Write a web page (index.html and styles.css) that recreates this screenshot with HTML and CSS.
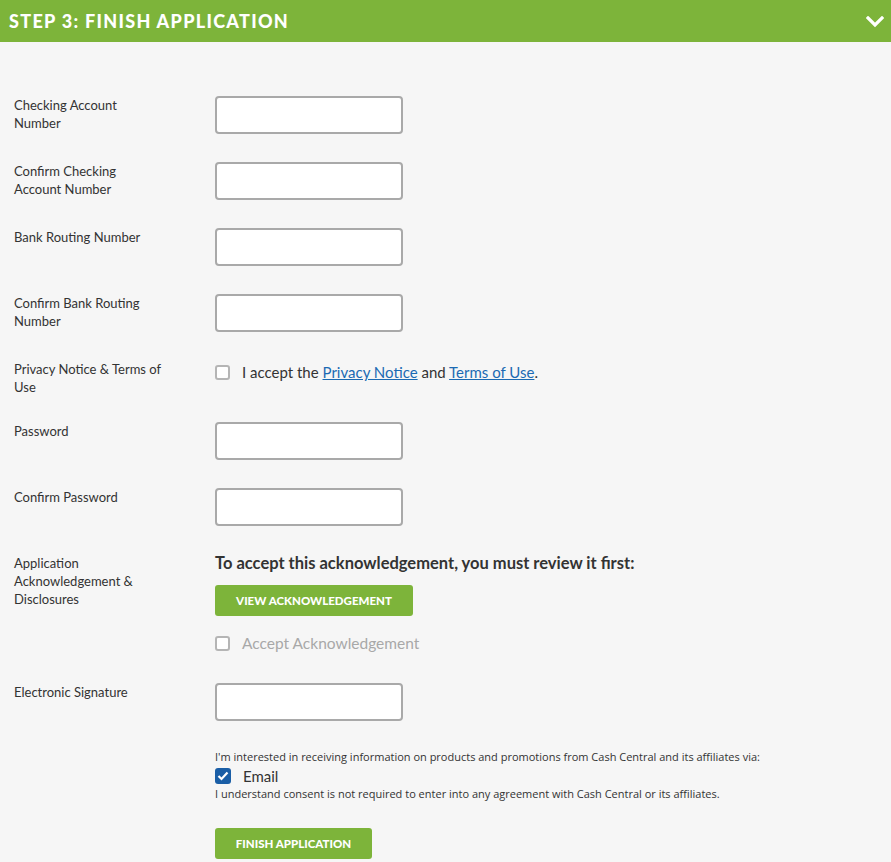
FILE: index.html
```html
<!DOCTYPE html>
<html>
<head>
    <meta charset="UTF-8">
    <meta name="viewport" content="width=device-width, initial-scale=1.0">
    <title>Finish Application</title>
    <link rel="stylesheet" href="styles.css">
</head>
<body>
    <div class="step-header">
        <h2 class="step-title">STEP 3: FINISH APPLICATION</h2>
        <svg class="chevron" width="18" height="12" viewBox="0 0 18 12">
            <path d="M2 2 L9 9 L16 2" fill="none" stroke="#fff" stroke-width="3.2" stroke-linecap="square"/>
        </svg>
    </div>

    <form class="app-form" onsubmit="return false">
        <div class="row">
            <label class="field-label" for="acct">Checking Account Number</label>
            <div class="field"><input type="text" id="acct" class="text-input"></div>
        </div>
        <div class="row">
            <label class="field-label" for="acct2">Confirm Checking Account Number</label>
            <div class="field"><input type="text" id="acct2" class="text-input"></div>
        </div>
        <div class="row">
            <label class="field-label" for="routing">Bank Routing Number</label>
            <div class="field"><input type="text" id="routing" class="text-input"></div>
        </div>
        <div class="row">
            <label class="field-label" for="routing2">Confirm Bank Routing Number</label>
            <div class="field"><input type="text" id="routing2" class="text-input"></div>
        </div>
        <div class="row row-tight">
            <div class="field-label">Privacy Notice &amp; Terms of Use</div>
            <div class="field">
                <div class="check-line">
                    <span class="box"></span>
                    <span>I accept the <a href="#">Privacy Notice</a> and <a href="#">Terms of Use</a>.</span>
                </div>
            </div>
        </div>
        <div class="row">
            <label class="field-label" for="pw">Password</label>
            <div class="field"><input type="password" id="pw" class="text-input"></div>
        </div>
        <div class="row">
            <label class="field-label" for="pw2">Confirm Password</label>
            <div class="field"><input type="password" id="pw2" class="text-input"></div>
        </div>
        <div class="row">
            <div class="field-label">Application Acknowledgement &amp; Disclosures</div>
            <div class="field">
                <p class="review-note">To accept this acknowledgement, you must review it first:</p>
                <button type="button" class="btn btn-view">VIEW ACKNOWLEDGEMENT</button>
                <div class="check-line disabled">
                    <span class="box"></span>
                    <span>Accept Acknowledgement</span>
                </div>
            </div>
        </div>
        <div class="row">
            <label class="field-label" for="sig">Electronic Signature</label>
            <div class="field"><input type="text" id="sig" class="text-input"></div>
        </div>
        <div class="row">
            <div></div>
            <div class="field consent">
                <p class="small">I'm interested in receiving information on products and promotions from Cash Central and its affiliates via:</p>
                <div class="check-line">
                    <span class="box checked">
                        <svg width="12" height="10" viewBox="0 0 12 10"><path d="M1.5 5 L4.5 8 L10.5 1.5" fill="none" stroke="#fff" stroke-width="2.2"/></svg>
                    </span>
                    <span>Email</span>
                </div>
                <p class="small">I understand consent is not required to enter into any agreement with Cash Central or its affiliates.</p>
                <button type="submit" class="btn btn-finish">FINISH APPLICATION</button>
            </div>
        </div>
    </form>
</body>
</html>
```

FILE: styles.css
```css
body {
    margin: 0;
    padding: 0;
    background-color: #f6f6f6;
    color: #333;
    font-family: Lato, "Open Sans", Arial, sans-serif;
}

.step-header {
    height: 42px;
    background-color: #7db43a;
    display: flex;
    align-items: center;
    justify-content: space-between;
    padding: 0 7px 0 9px;
}

.step-title {
    margin: 0;
    color: #fff;
    font-size: 18px;
    font-weight: 900;
    letter-spacing: 1.3px;
}

.chevron {
    margin-top: 1px;
}

.app-form {
    padding: 54px 0 0 14px;
}

.row {
    display: grid;
    grid-template-columns: 201px 1fr;
    margin-bottom: 28px;
}

.row-tight {
    margin-bottom: 26px;
}

.field-label {
    font-size: 13px;
    line-height: 18px;
    max-width: 150px;
    color: #333;
}

.text-input {
    display: block;
    width: 188px;
    height: 38px;
    box-sizing: border-box;
    border: 2px solid #a9a9a9;
    border-radius: 4px;
    background: #fff;
}

.check-line {
    display: flex;
    align-items: center;
    gap: 12px;
    font-size: 15px;
    line-height: 20px;
    margin-top: 2px;
}

.check-line a {
    color: #1b6ab3;
}

.box {
    width: 15px;
    height: 15px;
    box-sizing: border-box;
    border: 2px solid #b5b5b5;
    border-radius: 3px;
    background: #fff;
    flex: none;
    display: flex;
    align-items: center;
    justify-content: center;
}

.box.checked {
    width: 16px;
    height: 16px;
    border: none;
    background: #1a5ea6;
}

.disabled {
    color: #a8a8a8;
    font-size: 15.5px;
    margin-top: 5px;
    margin-bottom: 2px;
}

.review-note {
    margin: 0;
    font-size: 16.5px;
    font-weight: bold;
    line-height: 18px;
}

.btn {
    border: none;
    border-radius: 3px;
    background-color: #7db43a;
    color: #fff;
    font-family: Lato, Arial, sans-serif;
    font-size: 11.5px;
    font-weight: 900;
    height: 31px;
    cursor: pointer;
}

.btn-view {
    width: 198px;
    margin-top: 13px;
    margin-bottom: 12px;
}

.btn-finish {
    width: 157px;
    margin-top: 26px;
}

.consent .check-line {
    margin-top: 1px;
}

.small {
    margin: 0;
    font-family: "Open Sans", Arial, sans-serif;
    font-size: 11px;
    line-height: 16px;
}
```
